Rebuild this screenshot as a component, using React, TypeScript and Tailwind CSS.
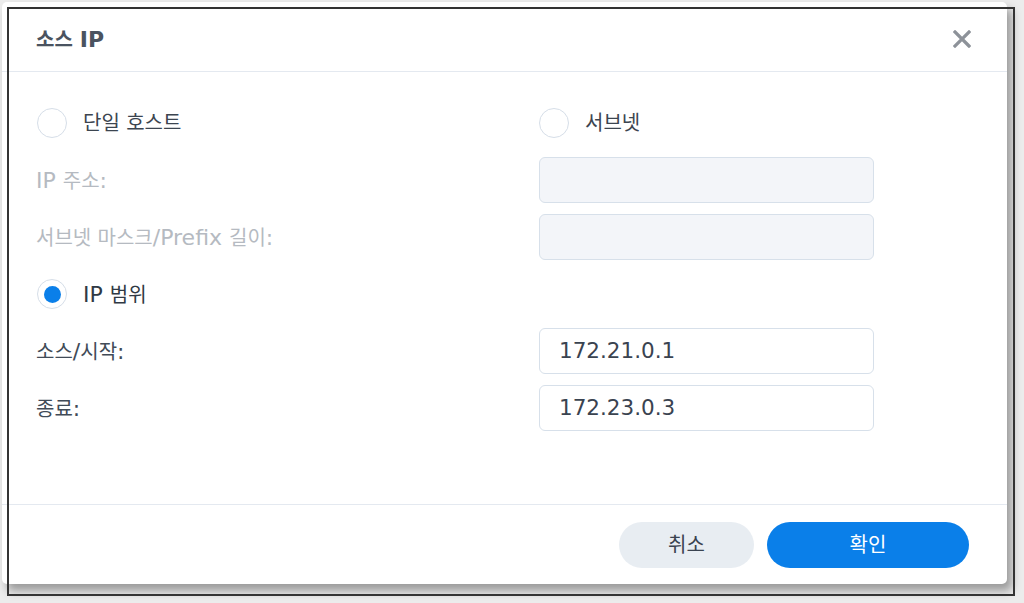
function Latin({ children }: { children: React.ReactNode }) {
  return <span className="text-[22px]">{children}</span>
}

function Radio({ checked = false }: { checked?: boolean }) {
  return (
    <span className="flex h-[30px] w-[30px] shrink-0 items-center justify-center rounded-full border-[1.5px] border-[#d6dee8] bg-white">
      {checked && <span className="h-[17px] w-[17px] rounded-full bg-[#0a7fe9]" />}
    </span>
  )
}

function Field({ value, disabled = false }: { value?: string; disabled?: boolean }) {
  return (
    <div
      className={`flex h-[46px] w-[335px] items-center rounded-[6px] border-[1.5px] border-[#d7e0ea] pl-[19px] text-[21.5px] text-[#3a4350] ${
        disabled ? 'bg-[#f3f5f9]' : 'bg-white'
      }`}
    >
      {value}
    </div>
  )
}

export default function App() {
  return (
    <div className="relative h-[603px] w-[1024px] overflow-hidden bg-[#ececec] pl-[2px] pt-[2px] font-['DejaVu_Sans','Noto_Sans_CJK_KR',sans-serif] text-[20px]">
      {/* Dialog */}
      <div className="flex h-[582px] w-[1005px] flex-col rounded-[5px] bg-white shadow-[5px_7px_10px_rgba(0,0,0,0.35)]">
        {/* Header */}
        <div className="flex h-[70px] shrink-0 items-center justify-between border-b border-[#e4e9f0] pl-[34px] pr-[36px] pt-[6px]">
          <h1 className="font-bold text-[#4a5360]">
            소스 <Latin>IP</Latin>
          </h1>
          <svg width="18" height="18" viewBox="0 0 18 18" className="mb-[2px]">
            <path d="M2 2L16 16M16 2L2 16" stroke="#8d9299" strokeWidth="3.2" strokeLinecap="square" />
          </svg>
        </div>

        {/* Body */}
        <div className="flex flex-1 flex-col gap-[11px] pl-[34px] pt-[28px]">
          <div className="flex h-[46px] items-center">
            <div className="flex w-[503px] items-center gap-[16px] pl-[1px] text-[#3c4550]">
              <Radio />
              <span>단일 호스트</span>
            </div>
            <div className="flex items-center gap-[16px] text-[#3c4550]">
              <Radio />
              <span>서브넷</span>
            </div>
          </div>

          <div className="flex h-[46px] items-center">
            <div className="w-[503px] text-[#b5bac1]">
              <Latin>IP </Latin>주소<Latin>:</Latin>
            </div>
            <Field disabled />
          </div>

          <div className="flex h-[46px] items-center">
            <div className="w-[503px] text-[#b5bac1]">
              서브넷 마스크<Latin>/Prefix </Latin>길이<Latin>:</Latin>
            </div>
            <Field disabled />
          </div>

          <div className="flex h-[46px] items-center">
            <div className="flex items-center gap-[16px] pl-[1px] text-[#2f3944]">
              <Radio checked />
              <span>
                <Latin>IP </Latin>범위
              </span>
            </div>
          </div>

          <div className="flex h-[46px] items-center">
            <div className="w-[503px] text-[#414b57]">
              소스<Latin>/</Latin>시작<Latin>:</Latin>
            </div>
            <Field value="172.21.0.1" />
          </div>

          <div className="flex h-[46px] items-center">
            <div className="w-[503px] text-[#414b57]">
              종료<Latin>:</Latin>
            </div>
            <Field value="172.23.0.3" />
          </div>
        </div>

        {/* Footer */}
        <div className="flex h-[80px] shrink-0 items-center justify-end gap-[13px] border-t border-[#e4e9f0] pr-[38px]">
          <button className="h-[46px] w-[135px] rounded-full bg-[#e8edf2] text-[#3a4350]">취소</button>
          <button className="h-[46px] w-[202px] rounded-full bg-[#0a7fe9] text-white">확인</button>
        </div>
      </div>

      {/* Screenshot frame */}
      <div className="pointer-events-none absolute left-[7px] top-[7px] h-[589px] w-[1008px] border-2 border-[#333]" />
    </div>
  )
}
